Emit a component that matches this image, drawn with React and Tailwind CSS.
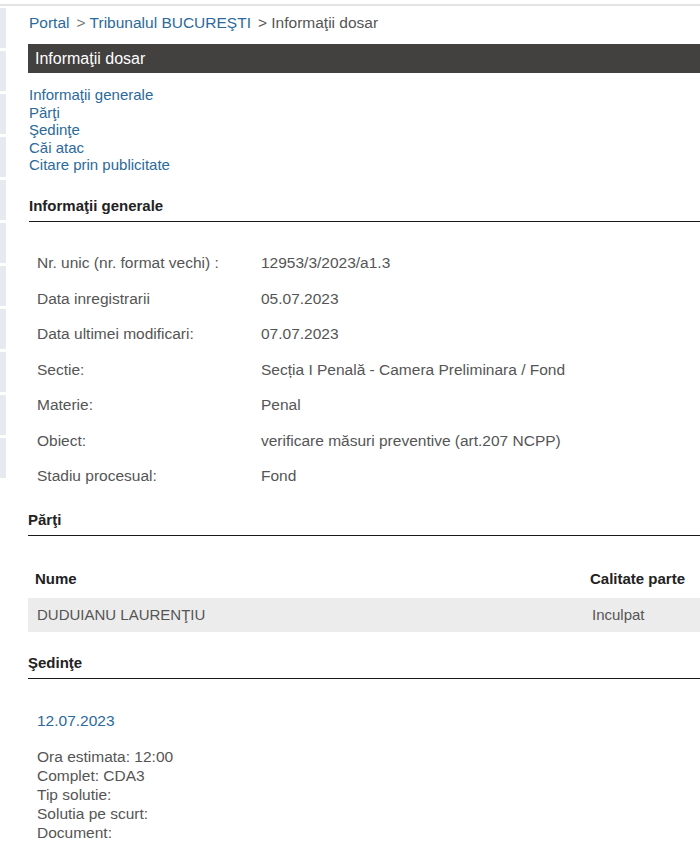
import React from "react";

const info = [
  ["Nr. unic (nr. format vechi) :", "12953/3/2023/a1.3"],
  ["Data inregistrarii", "05.07.2023"],
  ["Data ultimei modificari:", "07.07.2023"],
  ["Sectie:", "Secția I Penală - Camera Preliminara / Fond"],
  ["Materie:", "Penal"],
  ["Obiect:", "verificare măsuri preventive (art.207 NCPP)"],
  ["Stadiu procesual:", "Fond"],
];

const links = [
  "Informaţii generale",
  "Părţi",
  "Şedinţe",
  "Căi atac",
  "Citare prin publicitate",
];

const sedinta = [
  "Ora estimata: 12:00",
  "Complet: CDA3",
  "Tip solutie:",
  "Solutia pe scurt:",
  "Document:",
];

function SectionTitle({ children }) {
  return (
    <div className="border-b border-[#1a1a1a] pb-[6px] text-[15px] font-bold leading-[18px] text-[#222]">
      {children}
    </div>
  );
}

export default function App() {
  return (
    <div className="min-h-[845px] w-[700px] overflow-hidden bg-white font-['Liberation_Sans',Arial,sans-serif]">
      <div className="h-[4px]" />
      <div className="h-[2px] bg-[#e4e4e4]" />
      <div className="flex">
        {/* side strip */}
        <div className="mt-[2px] flex w-[6px] flex-col gap-[3px]">
          {Array.from({ length: 11 }).map((_, i) => (
            <div key={i} className="h-[40px] bg-[#e6eaf0]" />
          ))}
        </div>

        <div className="ml-[22px] flex-1">
          <div className="flex gap-[7px] pt-[8px] text-[15.5px] leading-[18px]">
            <span className="pl-[1px] text-[#2b6a9a]">Portal</span>
            <span className="text-[#2b6a9a]">
              <span className="text-[#777]">&gt;</span> Tribunalul BUCUREŞTI
            </span>
            <span className="text-[#555]">&gt; Informaţii dosar</span>
          </div>

          <div className="mt-[12px] h-[29px] bg-[#434040] pl-[7px] text-[16px] leading-[29px] text-white">
            Informaţii dosar
          </div>

          <div className="mt-[13px] flex flex-col pl-[1px] text-[15px] leading-[17.6px] text-[#2b6a9a]">
            {links.map((l) => (
              <span key={l}>{l}</span>
            ))}
          </div>

          <div className="mt-[23px] pl-[1px]">
            <SectionTitle>Informaţii generale</SectionTitle>
          </div>

          <div className="mt-[23px] text-[15.5px] text-[#555]">
            {info.map(([k, v]) => (
              <div key={k} className="flex h-[35.5px] items-center">
                <div className="w-[233px] pl-[9px]">{k}</div>
                <div>{v}</div>
              </div>
            ))}
          </div>

          <div className="mt-[18px]">
            <SectionTitle>Părţi</SectionTitle>
          </div>

          <div className="mt-[23px] text-[15px]">
            <div className="flex h-[39px] items-center font-bold text-[#222]">
              <div className="w-[562px] pl-[7px]">Nume</div>
              <div>Calitate parte</div>
            </div>
            <div className="flex h-[34px] items-center bg-[#ececec] text-[#555]">
              <div className="w-[564px] pl-[9px]">DUDUIANU LAURENŢIU</div>
              <div>Inculpat</div>
            </div>
          </div>

          <div className="mt-[22px]">
            <SectionTitle>Şedinţe</SectionTitle>
          </div>

          <div className="mt-[33px] pl-[9px] text-[15.5px] leading-[18px] text-[#2b6a9a]">
            12.07.2023
          </div>

          <div className="mt-[18px] flex flex-col pl-[9px] text-[15.5px] leading-[18.8px] text-[#555]">
            {sedinta.map((s) => (
              <span key={s}>{s}</span>
            ))}
          </div>
        </div>
      </div>
    </div>
  );
}
